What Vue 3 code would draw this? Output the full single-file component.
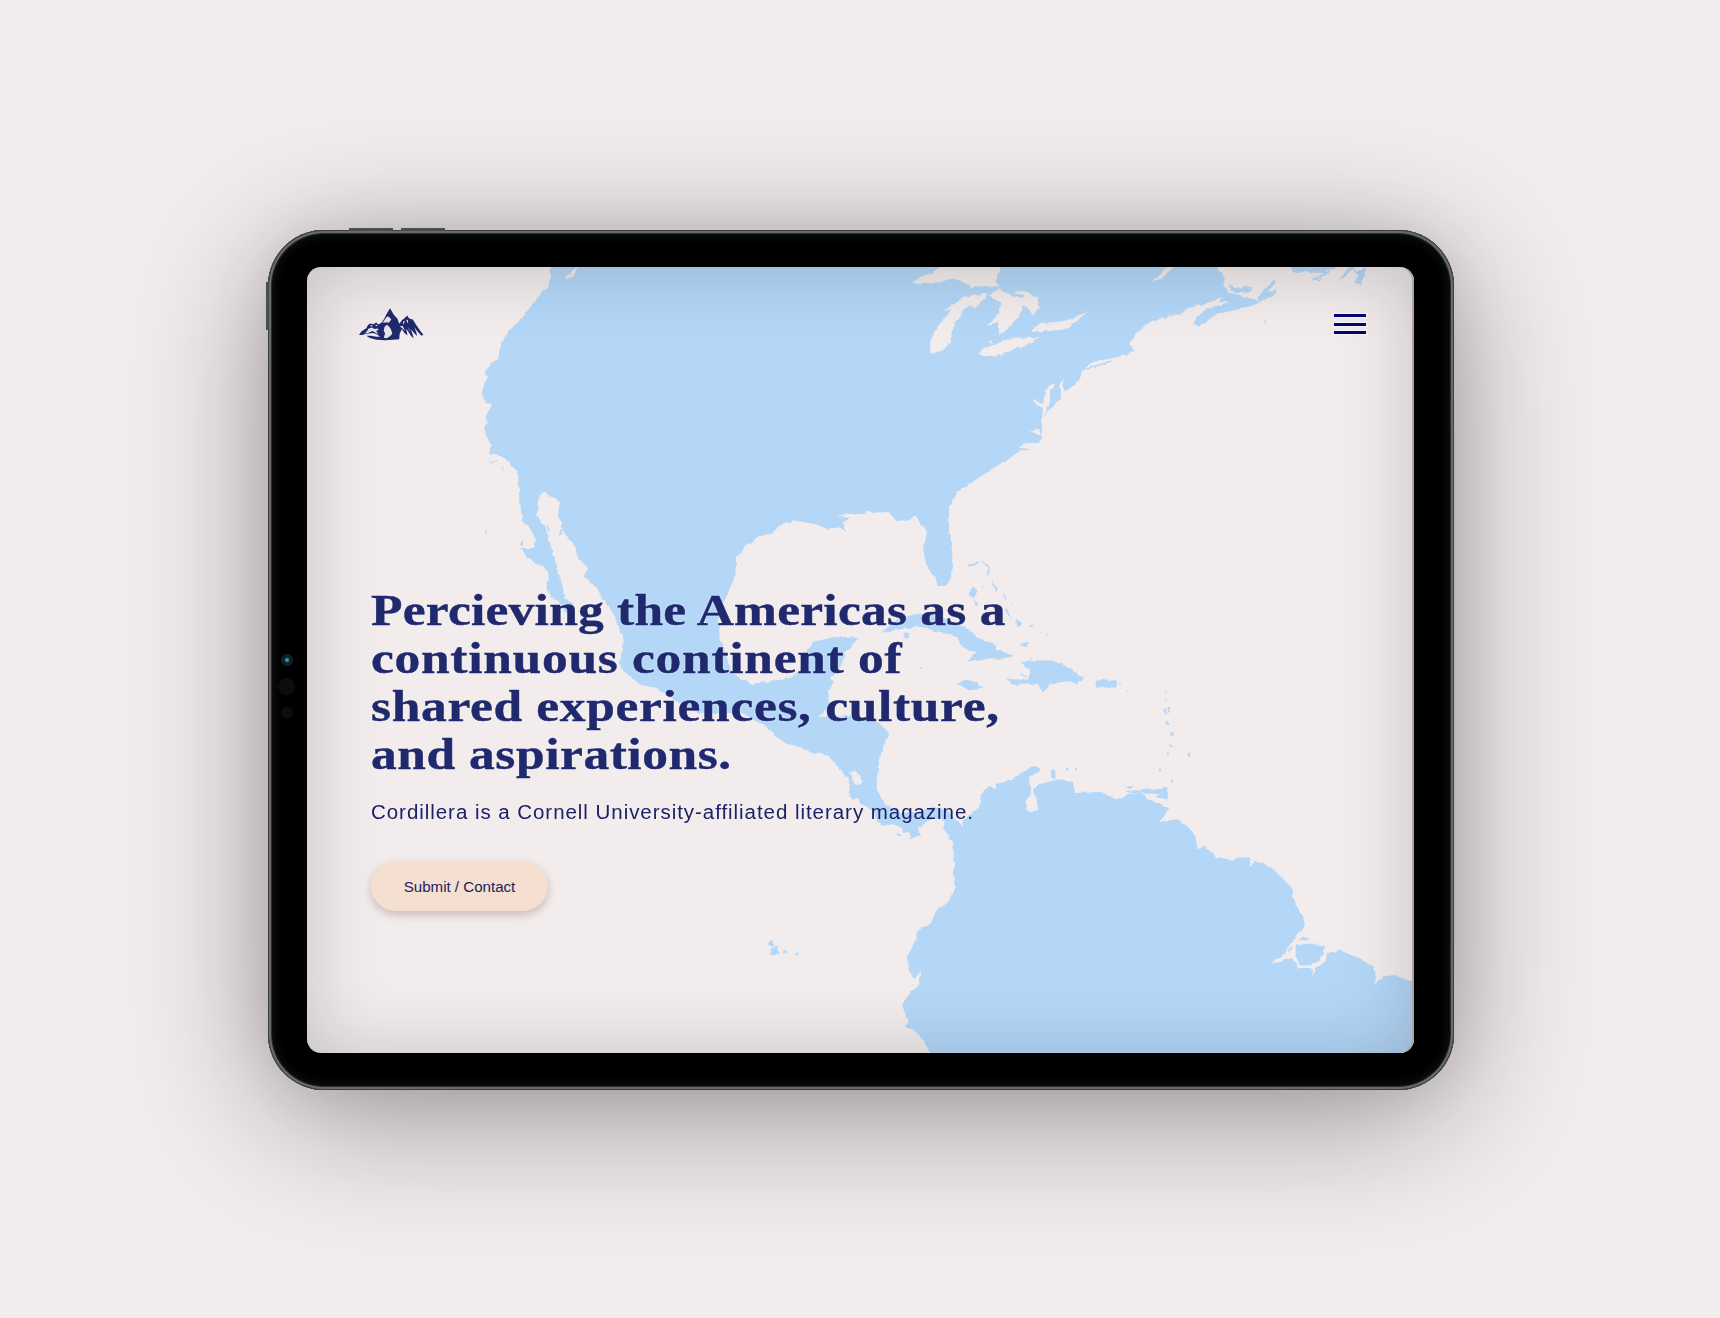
<script setup>
const headline = [
  { text: 'Percieving the Americas as a', spacing: 0.2 },
  { text: 'continuous continent of', spacing: 0.61 },
  { text: 'shared experiences, culture,', spacing: 0.57 },
  { text: 'and aspirations.', spacing: 0.47 }
]

const mainland =
  'M551 260L551 267 550 278 548 288 542 292 532 305 513 328 505 337 500 348 498 358 491 364 485 372 487 378 482 392 485 403 491 404 489 410 485 417 488 422 484 428 487 437 491 445 489 454 500 456 510 461 512 466 518 472 519 493 522 520 531 530 536 540 534 548 520 548 527 557 536 564 543 566 549 575 546 590 556 600 562 606 566 614 573 618 573 602 564 598 563 587 559 573 556 563 550 543 545 527 537 515 538 500 543 492 552 497 560 501 559 517 564 533 576 548 577 557 588 568 584 577 597 588 602 598 613 613 619 627 624 640 621 653 620 668 631 677 641 685 657 688 670 698 698 713 740 713 760 722 767 728 783 743 798 746 812 753 827 755 832 760 850 782 849 793 852 800 858 798 863 805 873 809 877 822 883 826 892 824 902 828 903 833 908 832 911 839 921 835 917 828 927 822 940 818 945 822 943 828 953 843 954 860 954 883 956 888 947 904 936 909 932 923 918 930 917 938 912 948 907 957 908 972 915 978 920 972 919 985 908 995 902 1005 905 1013 909 1022 905 1026 917 1033 924 1042 930 1053 930 1060 1420 1060 1420 982 1412 981 1405 980 1394 975 1385 976 1379 980 1374 986 1376 977 1372 965 1361 959 1339 950 1328 953 1325 962 1315 968 1313 976 1311 968 1298 968 1292 957 1281 962 1271 963 1283 956 1291 943 1300 932 1306 922 1300 913 1295 903 1291 887 1281 877 1272 868 1264 863 1255 861 1252 866 1248 858 1240 857 1231 860 1217 857 1213 853 1203 846 1197 850 1197 837 1188 827 1177 819 1167 821 1160 821 1167 813 1168 808 1160 803 1147 799 1142 793 1130 794 1117 799 1100 792 1075 793 1073 783 1060 779 1040 784 1033 789 1034 795 1038 802 1037 810 1032 813 1026 808 1027 800 1031 795 1031 787 1028 778 1038 772 1040 769 1036 766 1030 767 1012 780 995 783 995 789 990 785 981 795 979 807 970 815 962 820 963 828 958 822 947 810 933 807 917 812 900 813 887 806 877 790 876 780 879 770 879 762 883 747 888 738 887 729 878 723 855 716 818 717 830 705 828 690 834 684 831 677 841 667 845 653 854 643 858 638 848 637 834 637 813 642 806 653 800 670 790 678 773 681 752 684 741 678 732 675 727 657 720 640 719 620 725 600 732 583 736 573 736 557 745 547 756 538 773 532 784 523 798 521 815 524 827 529 838 527 847 531 843 523 849 518 838 515 849 514 866 514 867 510 872 513 888 512 897 521 904 520 916 517 922 524 927 532 923 550 926 563 929 570 935 577 938 586 946 586 951 576 953 567 952 547 949 530 949 507 957 492 974 481 995 467 1006 461 1018 452 1030 449 1040 443 1042 435 1042 418 1047 412 1061 399 1060 390 1066 391 1078 382 1083 370 1093 362 1118 357 1128 354 1135 352 1129 343 1133 337 1145 325 1162 318 1180 314 1188 308 1211 302 1223 296 1219 302 1230 302 1204 310 1193 322 1198 327 1217 314 1245 308 1259 303 1257 300 1245 297 1228 292 1223 285 1225 278 1217 267 1217 260Z'

const islands = [
  'M882 632L897 620 917 614 937 616 963 626 977 637 996 645 995 649 1013 656 1003 658 968 661 976 653 963 647 958 637 938 631 918 626 893 630Z',
  'M904 634L908 632 909 636 905 638Z',
  'M957 683L967 680 974 682 983 688 970 690Z',
  'M1007 679L1018 680 1030 680 1029 668 1021 663 1030 661 1053 661 1064 666 1073 671 1083 678 1078 684 1070 681 1060 682 1050 684 1043 692 1038 684 1025 683 1012 685Z',
  'M1022 674L1027 677 1023 676Z',
  'M1097 681L1108 680 1117 682 1115 687 1097 687Z',
  'M1020 644L1029 642 1025 646Z',
  'M968 566L979 563 974 567ZM982 561L990 567 987 575 989 568Z',
  'M973 586L977 592 974 597 969 594ZM974 600L978 604 976 606Z',
  'M992 581L997 588 997 592ZM1003 593L1006 600ZM1006 608L1010 616 1007 613ZM1016 619L1021 624 1018 627ZM1030 625L1034 626Z',
  'M1291 260L1292 271 1310 272 1328 273 1324 270 1334 268 1338 260Z',
  'M1314 280L1320 280 1329 270 1331 268 1324 274ZM1312 280L1318 279 1324 274 1320 281Z',
  'M1338 281L1347 275 1353 268 1358 274 1355 284 1361 283 1366 268 1360 270 1356 273 1351 266Z',
  'M1259 302L1259 297 1265 290 1274 280 1275 283 1267 292 1276 290 1273 296 1264 299Z',
  'M1229 284L1236 288 1252 287 1250 291 1238 293 1231 290Z',
  'M1127 791L1155 790 1168 788 1167 799 1157 797 1162 794 1127 792Z',
  'M1052 770L1055 770 1055 778 1051 777Z',
  'M1126 786L1133 787 1129 788Z',
  'M1083 370L1106 362 1112 361 1084 370Z',
  'M520 543L523 541 522 546ZM546 525L549 528 549 532ZM559 531L562 529 560 535Z',
  'M489 461L498 462 491 462ZM502 467L506 471Z',
  'M1296 945L1310 944 1324 946 1322 955 1318 961 1311 965 1300 965 1296 957Z',
  'M1299 940L1303 937 1308 939 1302 941ZM1288 952L1292 947 1291 951Z',
  'M768 944L772 940 773 946ZM771 949L777 946 780 954 772 955ZM783 949L787 951 784 953ZM795 954L798 952 798 955Z',
  'M897 833L900 835 898 837ZM936 822L938 823Z'
]

const waters = [
  'M912 283L922 276 932 273 945 262 1000 262 1000 270 995 282 999 287 983 286 971 287 961 281 954 278 945 281 928 284Z',
  'M931 353L930 342 936 329 944 318 952 309 944 311 963 297 976 295 988 293 985 299 975 308 971 305 964 309 954 325 951 342 942 351Z',
  'M988 296L1000 288 1004 292 1014 296 1023 298 1024 295 1012 293 1023 291 1037 297 1040 308 1033 314 1023 305 1020 314 1018 318 1009 328 999 335 999 322 985 326 995 318 999 314 1001 303Z',
  'M978 352L987 347 993 345 1011 338 1039 337 1032 343 1021 347 997 356 983 356Z',
  'M989 343L991 340 993 344Z',
  'M1031 332L1035 327 1042 323 1057 322 1068 320 1076 317 1089 311 1076 321 1069 328 1052 331Z',
  'M1151 282L1160 275 1172 263 1178 264 1162 277Z',
  'M1042 418L1043 408 1037 405 1034 399 1043 404 1045 391 1050 385 1055 383 1050 390 1050 402 1047 410Z',
  'M1042 435L1038 433 1029 432 1040 429ZM1042 443L1025 443 1020 448 1030 449Z',
  'M1060 392L1060 383 1064 379 1062 385 1065 392Z',
  'M850 772L854 771 860 775 863 784 857 785 852 780Z',
  'M565 277L572 272 578 266 574 276 566 279Z'
]

const antilles = [
  [1166, 692, 1], [1165, 700, 1], [1165, 712, 2], [1169, 710, 1.8], [1168, 723, 2],
  [1172, 734, 2.3], [1171, 745, 1.5], [1168, 754, 1.2], [1189, 755, 1.6], [1160, 770, 1.2],
  [1172, 782, 1.2], [1153, 697, 1], [1128, 691, 1.1], [1120, 684, 0.9], [1067, 769, 1.4],
  [1076, 769, 1.2], [1013, 603, 0.9], [982, 588, 0.9], [1040, 634, 0.8], [1047, 634, 0.8],
  [1150, 685, 0.8], [1031, 658, 0.9], [921, 668, 1], [486, 531, 1], [1265, 322, 1],
  [1112, 787, 0.8]
]
</script>

<template>
  <main class="stage">
    <div class="tablet">
      <i class="key key-a"></i>
      <i class="key key-b"></i>
      <i class="key key-side"></i>
      <i class="lens camera"></i>
      <i class="lens sensor"></i>
      <i class="lens sensor small"></i>

      <section class="screen">
        <svg class="map" viewBox="307 267 1107 786" aria-hidden="true">
          <defs>
            <filter id="coast" filterUnits="userSpaceOnUse" x="307" y="260" width="1107" height="800">
              <feTurbulence type="fractalNoise" baseFrequency="0.16" numOctaves="2" seed="4" result="noise" />
              <feDisplacementMap in="SourceGraphic" in2="noise" scale="4" xChannelSelector="R" yChannelSelector="G" />
              <feGaussianBlur stdDeviation="0.35" />
            </filter>
          </defs>
          <g filter="url(#coast)">
            <path class="land" :d="mainland" />
            <path v-for="(d, i) in waters" :key="'w' + i" class="water" :d="d" />
            <path v-for="(d, i) in islands" :key="'i' + i" class="land isle" :d="d" />
            <ellipse v-for="(p, i) in antilles" :key="'a' + i" class="land" :cx="p[0]" :cy="p[1]" :rx="p[2] * 0.8" :ry="p[2] * 1.2" />
          </g>
        </svg>

        <header class="bar">
          <svg class="logo" viewBox="39 40 198 100" aria-label="Cordillera">
            <path class="ink" d="M135 41L146 60 157 72 163 88 172 76 179 71 187 63 193 72 204 75 215 92 226 108 236 121 230 124 222 115 216 108 209 98 215 115 217 125 207 115 198 104 207 131 200 126 190 111 184 103 188 123 178 115 171 104 164 119 163 135 144 136 119 138 94 136 74 131 63 124 76 124 94 127 105 127 94 119 82 116 65 118 50 122 41 122 48 111 63 101 69 91 76 87 85 89 93 84 100 90 110 84 117 73 124 59Z" />
            <path class="snow" d="M119 75L127 65 133 68 139 75 132 84 121 84 113 85Z" />
            <path class="snow" d="M119 96L126 91 134 98 138 105 142 118 134 126 124 132 116 130 120 117 116 108Z" />
            <path class="snow" d="M69 103L80 99 88 104 98 102 100 106 93 110 100 119 91 115 82 110 70 115 58 118 67 108Z" />
            <path class="snow" d="M74 92L84 93 79 97ZM89 93L95 91 98 95ZM174 82L180 79 176 91ZM184 78L189 75 190 88ZM165 96L173 94 181 110 172 101ZM188 96L194 105 196 113Z" />
          </svg>
          <button class="menu" aria-label="Menu"><span></span><span></span><span></span></button>
        </header>

        <div class="hero">
          <h1>
            <span v-for="line in headline" :key="line.text" :style="{ letterSpacing: line.spacing + 'px' }">{{ line.text }}</span>
          </h1>
          <p>Cordillera is a Cornell University-affiliated literary magazine.</p>
          <a class="cta">Submit / Contact</a>
        </div>
        <div class="glare"></div>
      </section>
    </div>
  </main>
</template>

<style>
body {
  background: #f2ecec;
}
</style>

<style scoped>
.stage {
  box-sizing: border-box;
  width: 1720px;
  height: 1318px;
  padding: 230px 0 0 268px;
  overflow: hidden;
  background: #f2ecec;
}
.tablet {
  position: relative;
  box-sizing: border-box;
  width: 1186px;
  height: 860px;
  padding: 37px 40px 37px 39px;
  border-radius: 56px;
  background: #000;
  box-shadow:
    inset 0 0 0 1px #3c3f3f,
    inset 0 0 0 3px #6a6c6c,
    inset 0 0 0 4px #2b2d2d,
    inset 0 0 12px 4px #171818,
    0 26px 140px rgba(0, 0, 0, 0.36),
    0 0 60px rgba(0, 0, 0, 0.09);
}
.key {
  position: absolute;
  top: -2px;
  width: 44px;
  height: 3px;
  background: #4b4e4e;
}
.key-a {
  left: 81px;
}
.key-b {
  left: 133px;
}
.key-side {
  top: 52px;
  left: -2px;
  width: 3px;
  height: 48px;
}
.lens {
  position: absolute;
  border-radius: 50%;
  background: #0c0c0c;
}
.camera {
  left: 13px;
  top: 424px;
  width: 12px;
  height: 12px;
  background: radial-gradient(circle, #38a0b4 0 1px, #154e5c 2px, #081418 4px, #1d2222 5px);
}
.sensor {
  left: 10px;
  top: 448px;
  width: 17px;
  height: 17px;
}
.sensor.small {
  left: 13px;
  top: 477px;
  width: 12px;
  height: 12px;
}
.screen {
  position: relative;
  width: 1107px;
  height: 786px;
  border-radius: 14px;
  overflow: hidden;
  background: #f2ecec;
}
.map {
  position: absolute;
  inset: 0;
  width: 1107px;
  height: 786px;
}
.land {
  fill: #b4d7f8;
}
.isle {
  stroke: #b4d7f8;
  stroke-width: 0.8;
}
.water {
  fill: #f2ecec;
}
.bar {
  position: relative;
  display: flex;
  justify-content: space-between;
  align-items: flex-start;
  padding: 41px 48px 0 51px;
}
.logo {
  width: 66px;
  height: 33px;
}
.ink {
  fill: #20296e;
}
.snow {
  fill: #e9e4e5;
}
.menu {
  display: flex;
  flex-direction: column;
  gap: 5.5px;
  margin-top: 6px;
  padding: 0;
  border: 0;
  background: none;
}
.menu span {
  width: 32px;
  height: 3px;
  background: #050573;
  box-shadow: 0 0 1px 1px rgba(255, 255, 255, 0.55);
}
.hero {
  position: relative;
  display: flex;
  flex-direction: column;
  align-items: flex-start;
  padding: 246px 0 0 64px;
  color: #20296e;
}
h1 {
  margin: 0;
  font: bold 44px/48.1px "Liberation Serif", serif;
  white-space: nowrap;
  transform: scaleX(1.17);
  transform-origin: 0 0;
  -webkit-text-stroke: 0.4px #20296e;
  text-shadow: 0 0 2px rgba(255, 255, 255, 0.7);
}
h1 span {
  display: block;
  width: max-content;
}
p {
  margin: 19.6px 0 0;
  font: 19.5px/26px "Liberation Sans", sans-serif;
  letter-spacing: 0.9px;
  white-space: nowrap;
  color: #1c2269;
  transform: scaleX(1.052);
  transform-origin: 0 0;
}
.cta {
  box-sizing: border-box;
  width: 177px;
  height: 50px;
  margin-top: 36px;
  border-radius: 25px;
  background: #f5dfd0;
  box-shadow: 0 4px 9px rgba(110, 60, 60, 0.28);
  color: #20235f;
  font: 15.1px/51px "Liberation Sans", sans-serif;
  text-align: center;
}
.glare {
  position: absolute;
  inset: 0;
  border-radius: 14px;
  box-shadow: inset -2px 0 0 #aaa5a4, inset 0 3px 75px rgba(0, 0, 0, 0.19);
  pointer-events: none;
}
</style>
